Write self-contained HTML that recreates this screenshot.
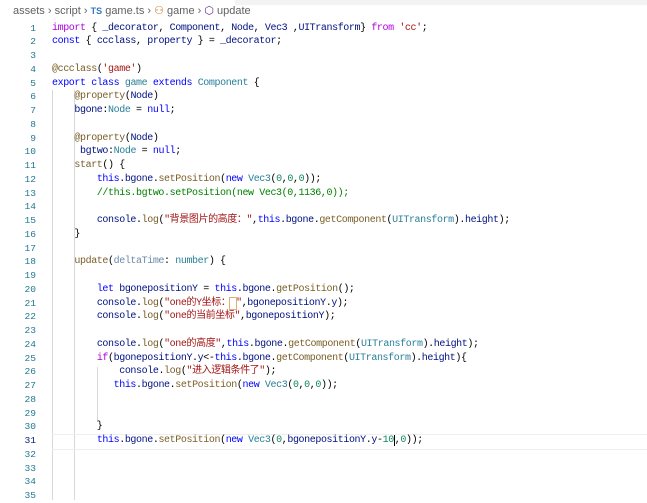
<!DOCTYPE html>
<html><head><meta charset="utf-8"><style>
body{margin:0;width:647px;height:500px;background:#fff;overflow:hidden;position:relative;font-family:"Liberation Mono","Noto Sans CJK SC",monospace;}
.top{position:absolute;left:235px;top:0;width:412px;height:5px;background:#f3f3f3}
.bc{position:absolute;left:13px;top:4px;font:11px "Liberation Sans",sans-serif;color:#616161;white-space:pre}
.ln{position:absolute;left:0;width:36px;text-align:right;font-size:9.6px;line-height:14px;height:14px;color:#237893}
.code{position:absolute;left:52px;font-size:10px;letter-spacing:-0.4px;line-height:14px;height:14px;white-space:pre;color:#000}
.code span{line-height:14px}
.g{position:absolute;width:1px;background:#d8d8d8}
.k{color:#0000ff}.p{color:#af00db}.s{color:#a31515}.f{color:#795e26}.t{color:#267f99}.v{color:#001080}.n{color:#098658}.c{color:#008000}
</style></head><body>
<div class="top"></div>
<div class="bc">assets › script › <b style="color:#3178c6;font-size:9px">TS</b> game.ts › <span style="color:#c27d1a">⚇</span> game › <span style="color:#652d90">⬡</span> update</div>
<div class="g" style="left:52px;top:90px;height:410px"></div>
<div class="g" style="left:74px;top:90px;height:410px"></div>
<div class="g" style="left:97px;top:367px;height:55px"></div>
<div style="position:absolute;left:52px;top:434px;width:595px;height:14px;border-top:1px solid #eee;border-bottom:1px solid #eee"></div>
<div id="L"></div>
<script>
var lines=[
'<span class="p">import</span> { <span class="v">_decorator</span>, <span class="v">Component</span>, <span class="v">Node</span>, <span class="v">Vec3</span> ,<span class="v">UITransform</span>} <span class="p">from</span> <span class="s">\'cc\'</span>;',
'<span class="k">const</span> { <span class="v">ccclass</span>, <span class="v">property</span> } = <span class="v">_decorator</span>;',
'',
'<span class="f">@ccclass</span>(<span class="s">\'game\'</span>)',
'<span class="k">export</span> <span class="k">class</span> <span class="t">game</span> <span class="k">extends</span> <span class="t">Component</span> {',
'    <span class="f">@property</span>(<span class="v">Node</span>)',
'    <span class="v">bgone</span>:<span class="t">Node</span> = <span class="k">null</span>;',
'',
'    <span class="f">@property</span>(<span class="v">Node</span>)',
'     <span class="v">bgtwo</span>:<span class="t">Node</span> = <span class="k">null</span>;',
'    <span class="f">start</span>() {',
'        <span class="k">this</span>.<span class="v">bgone</span>.<span class="f">setPosition</span>(<span class="k">new</span> <span class="t">Vec3</span>(<span class="n">0</span>,<span class="n">0</span>,<span class="n">0</span>));',
'        <span class="c">//this.bgtwo.setPosition(new Vec3(0,1136,0));</span>',
'',
'        <span class="v">console</span>.<span class="f">log</span>(<span class="s">"背景图片的高度："</span>,<span class="k">this</span>.<span class="v">bgone</span>.<span class="f">getComponent</span>(<span class="t">UITransform</span>).<span class="v">height</span>);',
'    }',
'',
'    <span class="f">update</span>(<span class="v" style="color:#6b8aa8">deltaTime</span>: <span class="t">number</span>) {',
'',
'        <span class="k">let</span> <span class="v">bgonepositionY</span> = <span class="k">this</span>.<span class="v">bgone</span>.<span class="f">getPosition</span>();',
'        <span class="v">console</span>.<span class="f">log</span>(<span class="s">"one的Y坐标：<span style="outline:1px solid #e0b070">&nbsp;</span>"</span>,<span class="v">bgonepositionY</span>.<span class="v">y</span>);',
'        <span class="v">console</span>.<span class="f">log</span>(<span class="s">"one的当前坐标"</span>,<span class="v">bgonepositionY</span>);',
'',
'        <span class="v">console</span>.<span class="f">log</span>(<span class="s">"one的高度"</span>,<span class="k">this</span>.<span class="v">bgone</span>.<span class="f">getComponent</span>(<span class="t">UITransform</span>).<span class="v">height</span>);',
'        <span class="p">if</span>(<span class="v">bgonepositionY</span>.<span class="v">y</span>&lt;-<span class="k">this</span>.<span class="v">bgone</span>.<span class="f">getComponent</span>(<span class="t">UITransform</span>).<span class="v">height</span>){',
'            <span class="v">console</span>.<span class="f">log</span>(<span class="s">"进入逻辑条件了"</span>);',
'           <span class="k">this</span>.<span class="v">bgone</span>.<span class="f">setPosition</span>(<span class="k">new</span> <span class="t">Vec3</span>(<span class="n">0</span>,<span class="n">0</span>,<span class="n">0</span>));',
'',
'',
'        }',
'        <span class="k">this</span>.<span class="v">bgone</span>.<span class="f">setPosition</span>(<span class="k">new</span> <span class="t">Vec3</span>(<span class="n">0</span>,<span class="v">bgonepositionY</span>.<span class="v">y</span>-<span class="n">10</span><span style="border-left:1px solid #000"></span>,<span class="n">0</span>));',
'','','',''];
var h='';
for(var i=0;i<35;i++){var t=21.5+i*13.75;
h+='<div class="ln" style="top:'+t+'px;'+(i==30?'color:#0b216f':'')+'">'+(i+1)+'</div>';
h+='<div class="code" style="top:'+t+'px">'+(lines[i]||'')+'</div>';}
document.getElementById('L').innerHTML=h;
</script>
</body></html>
